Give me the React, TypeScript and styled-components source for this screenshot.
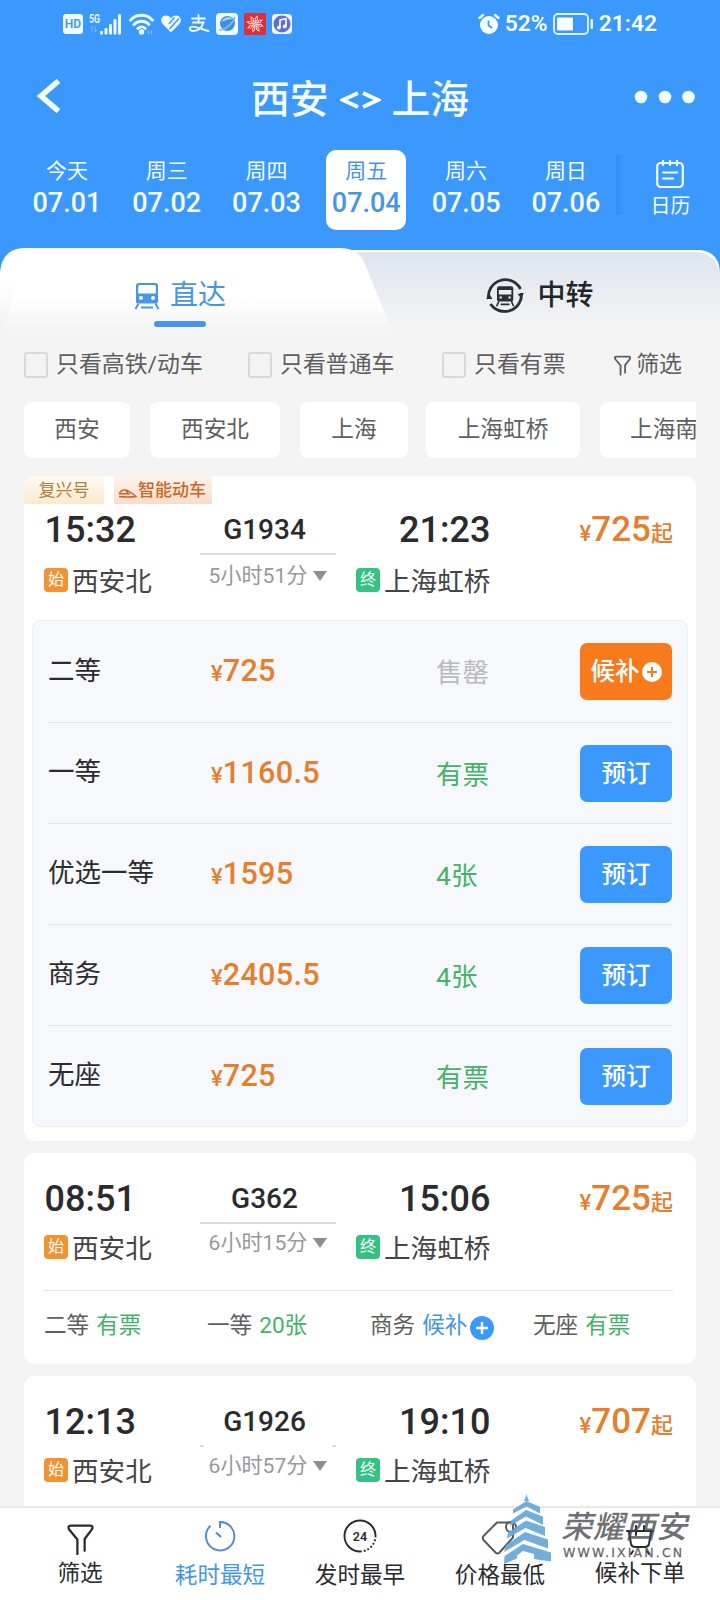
import React from 'react';
import styled, { createGlobalStyle, css } from 'styled-components';

const BLUE = '#3b98fc';
const LINK = '#4795e6';
const ORANGE = '#e57f2e';
const GREEN = '#45b26b';
const INK = '#2b2b2d';

const GlobalStyle = createGlobalStyle`
  *, *::before { box-sizing: border-box; }
  body {
    margin: 0;
    background: #f4f4f4;
    font-family: Roboto, "Noto Sans CJK SC", sans-serif;
    font-weight: 400;
    color: ${INK};
  }
  svg { display: block; flex: none; }
`;

const Screen = styled.div`
  position: relative;
  width: 720px;
  height: 1600px;
  overflow: hidden;
  display: flex;
  flex-direction: column;
  background: #f4f4f4;
`;

const Header = styled.header`
  height: 248px;
  flex: none;
  background: ${BLUE};
  color: #f6ffff;
`;

const StatusBar = styled.div`
  height: 50px;
  padding: 0 63px 2px 63px;
  display: flex;
  justify-content: space-between;
  align-items: center;
`;

const StatusGroup = styled.div<{ $gap: number }>`
  display: flex;
  align-items: center;
  gap: ${(p) => p.$gap}px;
  font-size: 22.8px;
  line-height: 26px;
  font-weight: 600;
`;

const TitleBar = styled.div`
  height: 98px;
  padding: 0 25px 2px 37px;
  display: grid;
  grid-template-columns: 60px 1fr 72px;
  align-items: center;
`;

const BackIcon = styled.svg`
  margin-top: -4px;
`;

const MoreIcon = styled.svg`
  justify-self: end;
  margin-top: -2px;
`;

const Title = styled.h1`
  margin: 4px 0 0;
  font-size: 38.8px;
  line-height: 50px;
  font-weight: 500;
  display: flex;
  justify-content: center;
  align-items: center;
  gap: 11px;
`;

const Swap = styled.svg`
  margin-top: -1px;
`;

const DateRow = styled.div`
  height: 84px;
  padding: 2px 0 0 17px;
  display: flex;
`;

const DateCell = styled.div<{ $active?: boolean }>`
  width: 99.8px;
  height: 80px;
  flex: none;
  display: flex;
  justify-content: center;
  & > div {
    width: 80px;
    height: 80px;
    padding-top: 7px;
    border-radius: 10px;
    display: flex;
    flex-direction: column;
    align-items: center;
    ${(p) => p.$active && css`background: #fff; color: ${LINK};`}
  }
`;

const DayName = styled.span`
  font-size: 21px;
  line-height: 28px;
`;

const DayDate = styled.span`
  margin-top: 1px;
  font-size: 27px;
  line-height: 34px;
  font-weight: 500;
`;

const Calendar = styled.div`
  flex: 1;
  height: 60px;
  margin-top: 5px;
  padding: 5px 0 0 5px;
  display: flex;
  flex-direction: column;
  align-items: center;
  gap: 5px;
  font-size: 20px;
  line-height: 26px;
  background: linear-gradient(90deg, rgba(30, 110, 210, 0.22), rgba(30, 110, 210, 0) 8px);
`;

const Tabs = styled.nav`
  position: relative;
  height: 84px;
  flex: none;
  display: flex;
  background: linear-gradient(${BLUE} 0 30px, #f4f4f4 30px);
`;

const TabBackdrop = styled.svg`
  position: absolute;
  inset: 0;
`;

const Tab = styled.div<{ $active?: boolean }>`
  position: relative;
  width: 360px;
  height: 84px;
  font-size: 28px;
  font-weight: ${(p) => (p.$active ? 400 : 500)};
  color: ${(p) => (p.$active ? LINK : '#222528')};
  display: flex;
  flex-direction: column;
  align-items: center;
`;

const TabLabel = styled.div<{ $gap: number }>`
  height: 73px;
  padding: 22px 0 0;
  display: flex;
  align-items: center;
  gap: ${(p) => p.$gap}px;
  line-height: 44px;
`;

const Underline = styled.div`
  width: 52px;
  height: 6px;
  border-radius: 3px;
  background: ${LINK};
`;

const FilterRow = styled.div`
  height: 70px;
  flex: none;
  padding: 0 38px 4px 24px;
  display: flex;
  align-items: center;
  color: #5e5e60;
  font-size: 22.9px;
  line-height: 28px;
`;

const Check = styled.label<{ $width: number }>`
  width: ${(p) => p.$width}px;
  display: flex;
  align-items: center;
  gap: 8px;
  white-space: nowrap;
  &::before {
    content: '';
    width: 24px;
    height: 26px;
    flex: none;
    border: 2px solid #d9d9d9;
    border-radius: 3px;
  }
`;

const FilterLink = styled.div`
  display: flex;
  align-items: center;
  gap: 5px;
  white-space: nowrap;
  margin-left: auto;
`;

const Chips = styled.div`
  height: 56px;
  flex: none;
  margin: 0 24px;
  overflow: hidden;
  display: flex;
  color: #5e5e60;
`;

const Chip = styled.div<{ $width: number; $gap: number }>`
  width: ${(p) => p.$width}px;
  margin-right: ${(p) => p.$gap}px;
  flex: none;
  height: 56px;
  border-radius: 8px;
  background: #fff;
  display: flex;
  align-items: center;
  justify-content: center;
  font-size: 22.7px;
  line-height: 30px;
`;

const List = styled.main`
  margin: 18px 24px 0;
  flex: 1;
  min-height: 0;
  overflow: hidden;
  display: flex;
  flex-direction: column;
  gap: 12px;
`;

const Card = styled.article<{ $height: number }>`
  height: ${(p) => p.$height}px;
  flex: none;
  border-radius: 10px;
  background: #fff;
  overflow: hidden;
`;

const Tags = styled.div`
  height: 28px;
  display: flex;
  align-items: flex-end;
  gap: 10px;
  font-size: 17px;
  line-height: 27px;
`;

const Tag = styled.span<{ $tone: 'gold' | 'copper' }>`
  height: 28px;
  display: flex;
  align-items: center;
  justify-content: center;
  gap: 1px;
  ${(p) =>
    p.$tone === 'gold'
      ? css`
          width: 80px;
          color: #a97f3d;
          background: linear-gradient(#fffaf3, #fde8cc);
        `
      : css`
          width: 98px;
          padding-right: 2px;
          color: #cc6528;
          background: linear-gradient(#fdf3ec, #fbdccb);
          font-weight: 500;
        `}
`;

const Trip = styled.div<{ $top: number; $height: number }>`
  height: ${(p) => p.$height}px;
  padding: ${(p) => p.$top}px 23px 0 20px;
  display: grid;
  grid-template-columns: 156px 136px 1fr auto;
`;

const Stop = styled.div<{ $arrive?: boolean }>`
  margin-left: ${(p) => (p.$arrive ? 20 : 0)}px;
`;

const Clock = styled.div<{ $indent: number }>`
  padding-left: ${(p) => p.$indent}px;
  height: 40px;
  font-size: 36px;
  line-height: 40px;
  font-weight: 500;
`;

const Station = styled.div<{ $gap: number }>`
  margin-top: ${(p) => p.$gap}px;
  height: 32px;
  display: flex;
  align-items: center;
  gap: 4px;
  font-size: 26.6px;
  line-height: 32px;
  color: #444446;
  white-space: nowrap;
`;

const Badge = styled.span<{ $color: string }>`
  width: 24px;
  height: 24px;
  border-radius: 4px;
  margin-top: -4px;
  background: ${(p) => p.$color};
  color: #fff;
  font-size: 16px;
  line-height: 24px;
  text-align: center;
`;

const Middle = styled.div`
  display: flex;
  flex-direction: column;
  align-items: center;
`;

const TrainNo = styled.div`
  height: 43px;
  padding-right: 7px;
  font-size: 28px;
  line-height: 39px;
  font-weight: 500;
`;

const Track = styled.div<{ $dots?: boolean }>`
  width: 136px;
  height: 2px;
  background: ${(p) =>
    p.$dots
      ? 'linear-gradient(90deg, #dcdcdc 0 4px, transparent 4px 132px, #dcdcdc 132px)'
      : '#dcdcdc'};
`;

const Duration = styled.div<{ $gap: number }>`
  margin-top: ${(p) => p.$gap}px;
  height: 26px;
  display: flex;
  align-items: center;
  gap: 6px;
  font-size: 21.1px;
  line-height: 26px;
  color: #98989a;
  white-space: nowrap;
`;

const FromPrice = styled.div`
  height: 40px;
  line-height: 40px;
  color: ${ORANGE};
  white-space: nowrap;
  font-size: 22px;
  font-weight: 500;
  b {
    font-size: 35px;
    font-weight: 500;
  }
`;

const FareBox = styled.div`
  margin: 0 8px;
  height: 507px;
  padding: 0 15px;
  border: 1px solid #eceff2;
  border-radius: 8px;
  background: #f6f8fc;
`;

const FareRow = styled.div`
  height: 101px;
  display: grid;
  grid-template-columns: 163px 225px 1fr 92px;
  align-items: center;
  font-size: 26.5px;
  line-height: 34px;
  & + & {
    border-top: 1px solid #e0e5ea;
  }
`;

const SeatName = styled.span`
  margin-top: -2px;
`;

const Fare = styled.span`
  padding-top: 2px;
  color: ${ORANGE};
  font-weight: 500;
  font-size: 22px;
  b {
    font-size: 30.6px;
    font-weight: 500;
    letter-spacing: 0.3px;
  }
`;

const Stock = styled.span<{ $soldOut?: boolean }>`
  padding-top: 3px;
  color: ${(p) => (p.$soldOut ? '#b9b9bd' : GREEN)};
`;

const Book = styled.button<{ $wait?: boolean }>`
  width: 92px;
  height: 57px;
  padding: 1px 0 0;
  border: 0;
  border-radius: 7px;
  background: ${(p) => (p.$wait ? '#f77b1d' : BLUE)};
  color: #fff;
  font: 500 24.5px/30px Roboto, 'Noto Sans CJK SC', sans-serif;
  display: flex;
  align-items: center;
  justify-content: center;
  gap: 2px;
`;

const SeatSummary = styled.div`
  margin: 0 23px 0 20px;
  padding-top: 20px;
  border-top: 1.5px solid #e2e2e2;
  display: grid;
  grid-template-columns: 163px 163px 163px auto;
  font-size: 22.6px;
  line-height: 30px;
  color: #5e5e60;
`;

const SeatItem = styled.span<{ $wait?: boolean }>`
  display: flex;
  align-items: center;
  gap: 7px;
  white-space: nowrap;
  em {
    font-style: normal;
    display: flex;
    align-items: center;
    gap: 3px;
    color: ${(p) => (p.$wait ? LINK : GREEN)};
  }
  svg {
    margin-top: 3px;
  }
`;

const BottomBar = styled.footer`
  height: 94px;
  flex: none;
  padding: 0 10px;
  border-top: 2px solid #e8e8e8;
  background: #fff;
  display: grid;
  grid-template-columns: repeat(5, 140px);
`;

const BottomItem = styled.div<{ $active?: boolean; $top: number; $drop: number }>`
  padding-top: ${(p) => p.$top}px;
  display: flex;
  flex-direction: column;
  align-items: center;
  font-size: 22.6px;
  line-height: 30px;
  color: ${(p) => (p.$active ? LINK : INK)};
  span {
    margin-top: ${(p) => p.$drop}px;
  }
`;

const Watermark = styled.div`
  position: absolute;
  left: 503px;
  top: 1494px;
  display: flex;
  gap: 8px;
  pointer-events: none;
`;

const WatermarkText = styled.div`
  padding-top: 15px;
  color: rgba(70, 72, 76, 0.8);
`;

const WatermarkName = styled.div`
  font-family: 'Liberation Serif', 'Noto Sans CJK SC', serif;
  font-size: 31px;
  line-height: 37px;
  font-style: italic;
  font-weight: 500;
  letter-spacing: 0.7px;
  white-space: nowrap;
`;

const WatermarkUrl = styled.div`
  padding-left: 2px;
  font-family: 'DejaVu Sans', sans-serif;
  font-size: 12.5px;
  line-height: 14px;
  letter-spacing: 2.15px;
  -webkit-text-stroke: 0.3px rgba(70, 72, 76, 0.8);
  white-space: nowrap;
`;

const HdIcon = () => (
  <svg width="20" height="20" viewBox="0 0 20 20">
    <rect width="20" height="20" rx="3" fill="#f0f9ff" />
    <text x="10" y="14.3" textAnchor="middle" fontSize="12" fontWeight="600" fill={BLUE}>HD</text>
  </svg>
);

const SignalIcon = () => (
  <svg width="34" height="24" viewBox="0 0 34 24" fill="#eef9ff">
    <text x="0" y="11" fontSize="13" fontWeight="600" textLength="11" lengthAdjust="spacingAndGlyphs">5G</text>
    <path d="M3 14v6M1.500 16l1.500-2M6 20v-6M7.500 18l-1.500 2" stroke="#80bdff" fill="none" />
    <rect x="11" y="19" width="3" height="3.500" rx="1" />
    <rect x="15.500" y="16" width="3" height="6.500" rx="1" />
    <rect x="20" y="12" width="3" height="10.500" rx="1" />
    <rect x="24.500" y="7" width="3" height="15.500" rx="1" />
    <rect x="29" y="2" width="3" height="20.500" rx="1" />
  </svg>
);

const WifiIcon = () => (
  <svg width="25" height="22" viewBox="0 0 25 22" fill="none" stroke="#eef9ff" strokeWidth="2.900" strokeLinecap="round">
    <path d="M1.500 7.200C7.500.6 17.500.6 23.500 7.200M5 11.500c4-4.400 11-4.400 15 0M8.800 15.500c2-2.200 5.400-2.200 7.400 0" />
    <circle cx="12.500" cy="19" r="1.300" fill="#eef9ff" />
    <path d="M19.500 17.500v3.500M22.500 17.500v3.500" stroke="#80bdff" strokeWidth="1.200" />
  </svg>
);

const HealthIcon = () => (
  <svg width="22" height="20" viewBox="0 0 22 20">
    <path
      d="M11 18.500L2.300 9.500C-.5 6 2 1.500 6 1.500c2.300 0 4 1.200 5 3 1-1.800 2.800-3 5-3 4 0 6.500 4.500 3.700 8z"
      fill="#eef9ff"
    />
    <path d="M14.500 3.500L9 10M19 4.500L9.500 15" stroke={BLUE} strokeWidth="1.400" />
  </svg>
);

const PayIcon = () => (
  <svg width="22" height="20" viewBox="0 0 22 20" fill="none" stroke="#eef9ff" strokeWidth="1.900" strokeLinecap="round">
    <path d="M4 4.500h13M10.500 1v7M5 8.500h10.500c-2 6-6 8.500-10 8.500-4.500 0-5-4-1-4.400C9 12.300 13 15.500 20.500 17" />
  </svg>
);

const BrowserIcon = () => (
  <svg width="22" height="22" viewBox="0 0 22 22">
    <rect width="22" height="22" rx="4" fill="#f1faff" />
    <circle cx="11.500" cy="10.500" r="7.500" fill="#3f8fe0" />
    <path d="M5 9c3-5 8-6 12-3-4 0-7 1-12 3z" fill="#a9d5fa" />
    <path d="M3 17C9 17 17 11 19 4" stroke="#7fb9ee" strokeWidth="1.600" fill="none" />
  </svg>
);

const HuaweiIcon = () => (
  <svg width="22" height="22" viewBox="0 0 22 22" fill="none" stroke="#ffd5d2" strokeWidth="1">
    <rect width="22" height="22" rx="1" fill="#dc2f37" stroke="none" />
    {[0, 45, 90, 135, 180, 225, 270, 315].map((a) => (
      <path key={a} d="M11 9.500L9.800 5.500 11 3l1.200 2.500z" transform={`rotate(${a + 15} 11 11)`} />
    ))}
  </svg>
);

const MusicIcon = () => (
  <svg width="20" height="20" viewBox="0 0 20 20">
    <rect width="20" height="20" rx="4" fill="#f4f6ff" />
    <circle cx="10" cy="10" r="8.500" fill="#5c6fd6" />
    <path d="M8 13.500V6l6-1.200v7.500" stroke="#fff" strokeWidth="1.600" fill="none" />
    <circle cx="6.800" cy="13.600" r="1.900" fill="#fff" />
    <circle cx="12.700" cy="12.400" r="1.900" fill="#fff" />
  </svg>
);

const AlarmIcon = () => (
  <svg width="22" height="22" viewBox="0 0 22 22">
    <circle cx="11" cy="12" r="9" fill="#f6ffff" />
    <path d="M1.500 5L5 2M20.500 5L17 2" stroke="#f6ffff" strokeWidth="2.400" strokeLinecap="round" />
    <path d="M10.500 7.500v5l3.500 2.500" stroke={BLUE} strokeWidth="1.800" fill="none" />
  </svg>
);

const BatteryIcon = () => (
  <svg width="41" height="22" viewBox="0 0 41 22">
    <rect x="1" y="1" width="34" height="20" rx="4" fill="none" stroke="#dff3ff" strokeWidth="1.900" />
    <rect x="4" y="4.500" width="16" height="13" rx="1" fill="#f6ffff" />
    <rect x="37.500" y="6" width="2.500" height="10" rx="1" fill="#dff3ff" />
  </svg>
);

const CalendarIcon = () => (
  <svg width="28" height="28" viewBox="0 0 28 28" fill="none" stroke="#f2fbff" strokeWidth="2.200" strokeLinecap="round">
    <rect x="1.200" y="3" width="25.600" height="24" rx="3.500" />
    <path d="M7 1v4M14 1v4M21 1v4M7 12.500h14M7 18.500h10" />
  </svg>
);

const TrainIcon = () => (
  <svg width="26" height="28" viewBox="0 0 26 28">
    <path
      fillRule="evenodd"
      fill="currentColor"
      d="M5 1h16q3 0 3 3v15q0 2.500-2.500 2.500h-17Q2 21.500 2 19V4q0-3 3-3zM4.200 4.500v7h17.600v-7Q21.800 3 20.300 3H5.700Q4.200 3 4.200 4.500zM7 14a2 2 0 100 4 2 2 0 000-4zM19 14a2 2 0 100 4 2 2 0 000-4z"
    />
    <path d="M4.500 21.500L1.500 27M21.500 21.500l3 5.500M7 25.500h12" stroke="currentColor" strokeWidth="2" />
  </svg>
);

const TransferIcon = () => (
  <svg width="38" height="38" viewBox="0 0 38 38" color="#2b2e33">
    <g fill="none" stroke="currentColor" strokeWidth="2.800">
      <path d="M2.500 22A17 17 0 0 1 34.500 12" />
      <path d="M35.500 16A17 17 0 0 1 4.500 27" />
    </g>
    <path d="M0 22l3.500-5 3 5zM38 16l-3 5-3.500-4z" fill="currentColor" />
    <g transform="translate(9.500 8.500) scale(.74)">
      <path
        fillRule="evenodd"
        fill="currentColor"
        d="M5 1h16q3 0 3 3v15q0 2.500-2.500 2.500h-17Q2 21.500 2 19V4q0-3 3-3zM4.500 6v6h17V6zM5.500 15v2.500h3V15zM17.500 15v2.500h3V15z"
      />
      <path d="M4.500 21.500L1.500 28M21.500 21.500l3 6.500M7 25.500h12" stroke="currentColor" strokeWidth="2.200" />
    </g>
  </svg>
);

const FunnelIcon = ({ width, height, stroke }: { width: number; height: number; stroke: number }) => (
  <svg width={width} height={height} viewBox="0 0 26 30" fill="none" stroke="currentColor" strokeWidth={stroke} strokeLinecap="round" strokeLinejoin="round">
    <path d="M10 29V15L1.800 5Q.5 1.500 3.500 1.500h19Q25.500 1.500 24.200 5L17 14.500V26" />
  </svg>
);

const BulletIcon = styled.svg`
  margin-top: 6px;
`;

const BulletTrainIcon = () => (
  <BulletIcon width="19" height="9" viewBox="0 0 19 9" fill="none" stroke="#cc6528" strokeWidth="1.400">
    <path d="M1 5Q3 .8 7 1q4 .5 11 6.500Q10 8.500 1 7.500M1 4.800h11M8 1.500l2 3" />
  </BulletIcon>
);

const PlusIcon = ({ size, fill, ink }: { size: number; fill: string; ink: string }) => (
  <svg width={size} height={size} viewBox="0 0 20 20">
    <circle cx="10" cy="10" r="10" fill={fill} />
    <path d="M10 5v10M5 10h10" stroke={ink} strokeWidth="2" />
  </svg>
);

const Triangle = () => (
  <svg width="14" height="10" viewBox="0 0 14 10">
    <path d="M0 0h14L7 10z" fill="#8e8e90" />
  </svg>
);

const TimerIcon = () => (
  <svg width="32" height="32" viewBox="0 0 32 32" fill="none" stroke="#5a87d8" strokeWidth="2">
    <path d="M16 8V2a14.200 14.200 0 1 1-9.500 3.800" />
    <path d="M12 12.500l5 4.500" strokeWidth="2.200" />
  </svg>
);

const Hours24Icon = () => (
  <svg width="34" height="34" viewBox="0 0 34 34" fill="none" stroke="#2b2b2d" strokeWidth="1.900">
    <path d="M32.500 17A15.500 15.500 0 1 0 17 32.500" />
    <path d="M17 32.500A15.500 15.500 0 0 0 32.500 17" strokeDasharray="1.800 2" />
    <text x="17" y="21.500" textAnchor="middle" fontSize="12.500" fontWeight="600" fill="#2b2b2d" stroke="none">24</text>
  </svg>
);

const PriceTagIcon = () => (
  <svg width="38" height="36" viewBox="0 0 38 36" fill="none" stroke="#555a60" strokeWidth="2" strokeLinejoin="round">
    <path d="M16 3.500h16v15L18.500 33.500q-2 2-4 0L2.500 21q-1.500-2 0-4z" />
    <circle cx="30" cy="8" r="5" />
  </svg>
);

const WaitlistIcon = () => (
  <svg width="30" height="36" viewBox="0 0 30 36" fill="none" stroke="#2b2b2d" strokeWidth="2" strokeLinecap="round">
    <path d="M2 11h26M4 12l2 12q.8 3 4 3h10q3.200 0 4-3l2-12M11 6v9M19 6v4M8 31l-2 3M22 31l2 3" />
  </svg>
);

const Pagoda = () => (
  <svg width="50" height="70" viewBox="0 0 50 70" fill="#68a8d8" fillOpacity="0.93">
    <path d="M23.500 0l1.500 5 1.500 2h-6l1.500-2z" />
    <path d="M10 15.500L23.500 7 37 13v6.500L23.500 12.500 10 19.500z" />
    <path d="M8 26.500L23 16l17 6.500v8.500L23 22.500 7 32z" />
    <path d="M5 38.500L23 26.500 42 33v9L22.500 34 4 44.500z" />
    <path d="M3 51L22 38l23 7.500v9L21.500 46 1 58z" />
    <path d="M1.500 62L20 50l28 8.500v9L31 65v-5l-11-3-6 4.500v3L1 70z" />
  </svg>
);

const dates = [
  ['今天', '07.01'],
  ['周三', '07.02'],
  ['周四', '07.03'],
  ['周五', '07.04'],
  ['周六', '07.05'],
  ['周日', '07.06'],
];

const chips: [string, number, number][] = [
  ['西安', 106, 20],
  ['西安北', 130, 20],
  ['上海', 108, 18],
  ['上海虹桥', 154, 20],
  ['上海南', 128, 0],
];

const fares: { seat: string; price: string; stock: string; wait?: boolean }[] = [
  { seat: '二等', price: '725', stock: '售罄', wait: true },
  { seat: '一等', price: '1160.5', stock: '有票' },
  { seat: '优选一等', price: '1595', stock: '4张' },
  { seat: '商务', price: '2405.5', stock: '4张' },
  { seat: '无座', price: '725', stock: '有票' },
];

const seats: { seat: string; stock: string; wait?: boolean }[] = [
  { seat: '二等', stock: '有票' },
  { seat: '一等', stock: '20张' },
  { seat: '商务', stock: '候补', wait: true },
  { seat: '无座', stock: '有票' },
];

interface TripProps {
  depart: string;
  arrive: string;
  train: string;
  duration: string;
  price: string;
  top: number;
  height: number;
  gap: number;
  dots?: boolean;
}

const TripInfo = ({ depart, arrive, train, duration, price, top, height, gap, dots }: TripProps) => (
  <Trip $top={top} $height={height}>
    <Stop>
      <Clock $indent={0.5}>{depart}</Clock>
      <Station $gap={gap}>
        <Badge $color="#f09331">始</Badge>西安北
      </Station>
    </Stop>
    <Middle>
      <TrainNo>{train}</TrainNo>
      <Track $dots={dots} />
      <Duration $gap={gap - 8}>
        {duration}
        <Triangle />
      </Duration>
    </Middle>
    <Stop $arrive>
      <Clock $indent={43}>{arrive}</Clock>
      <Station $gap={gap}>
        <Badge $color="#37c285">终</Badge>上海虹桥
      </Station>
    </Stop>
    <FromPrice>
      ¥<b>{price}</b>起
    </FromPrice>
  </Trip>
);

export default function App() {
  return (
    <>
      <GlobalStyle />
      <Screen>
        <Header>
          <StatusBar>
            <StatusGroup $gap={6}>
              <HdIcon />
              <SignalIcon />
              <WifiIcon />
              <HealthIcon />
              <PayIcon />
              <BrowserIcon />
              <HuaweiIcon />
              <MusicIcon />
            </StatusGroup>
            <StatusGroup $gap={5}>
              <AlarmIcon />
              52%
              <BatteryIcon />
              21:42
            </StatusGroup>
          </StatusBar>
          <TitleBar>
            <BackIcon width="24" height="34" viewBox="0 0 24 34" fill="none" stroke="#f6ffff" strokeWidth="5.500">
              <path d="M21.500 2L4 17l17.500 15" />
            </BackIcon>
            <Title>
              西安
              <Swap width="41" height="20" viewBox="0 0 41 20" fill="none" stroke="#f6ffff" strokeWidth="3.800">
                <path d="M18 3L3 10l15 7M23 3l15 7-15 7" />
              </Swap>
              上海
            </Title>
            <MoreIcon width="62" height="14" viewBox="0 0 62 14" fill="#f6ffff">
              <circle cx="8" cy="7" r="6.300" />
              <circle cx="32" cy="7" r="6.300" />
              <circle cx="55.500" cy="7" r="6.300" />
            </MoreIcon>
          </TitleBar>
          <DateRow>
            {dates.map(([day, date]) => (
              <DateCell key={date} $active={date === '07.04'}>
                <div>
                  <DayName>{day}</DayName>
                  <DayDate>{date}</DayDate>
                </div>
              </DateCell>
            ))}
            <Calendar>
              <CalendarIcon />
              日历
            </Calendar>
          </DateRow>
        </Header>

        <Tabs>
          <TabBackdrop width="720" height="84" viewBox="0 0 720 84">
            <defs>
              <linearGradient id="idle" x1="0" y1="0" x2="0" y2="1">
                <stop offset="0" stopColor="#dfe5ef" />
                <stop offset="1" stopColor="#f4f4f4" />
              </linearGradient>
              <linearGradient id="current" x1="0" y1="0" x2="0" y2="1">
                <stop offset="0.6" stopColor="#fff" />
                <stop offset="1" stopColor="#f4f4f4" />
              </linearGradient>
              <linearGradient id="edge" x1="0" y1="0" x2="0" y2="1">
                <stop offset="0" stopColor="#f4f4f4" stopOpacity="0" />
                <stop offset="1" stopColor="#f4f4f4" />
              </linearGradient>
            </defs>
            <path d="M300 2h400q20 2 20 24v58H300z" fill="#fff" />
            <path d="M300 4h396q22 2 24 24v56H300z" fill="url(#idle)" />
            <path d="M0 24Q2 2 22 0H340q18 0 24 14l27 66v4H0z" fill="url(#current)" />
            <path d="M0 30h19L6 72v12H0z" fill="url(#edge)" />
          </TabBackdrop>
          <Tab $active>
            <TabLabel $gap={10}>
              <TrainIcon />
              直达
            </TabLabel>
            <Underline />
          </Tab>
          <Tab>
            <TabLabel $gap={13}>
              <TransferIcon />
              中转
            </TabLabel>
          </Tab>
        </Tabs>

        <FilterRow>
          <Check $width={224}>只看高铁/动车</Check>
          <Check $width={194}>只看普通车</Check>
          <Check $width={150}>只看有票</Check>
          <FilterLink>
            <FunnelIcon width={17} height={21} stroke={2.8} />
            筛选
          </FilterLink>
        </FilterRow>

        <Chips>
          {chips.map(([name, width, gap]) => (
            <Chip key={name} $width={width} $gap={gap}>
              {name}
            </Chip>
          ))}
        </Chips>

        <List>
          <Card $height={665}>
            <Tags>
              <Tag $tone="gold">复兴号</Tag>
              <Tag $tone="copper">
                <BulletTrainIcon />
                智能动车
              </Tag>
            </Tags>
            <TripInfo depart="15:32" arrive="21:23" train="G1934" duration="5小时51分" price="725" top={6} height={116} gap={16} />
            <FareBox>
              {fares.map((f) => (
                <FareRow key={f.seat}>
                  <SeatName>{f.seat}</SeatName>
                  <Fare>
                    ¥<b>{f.price}</b>
                  </Fare>
                  <Stock $soldOut={f.wait}>{f.stock}</Stock>
                  <Book $wait={f.wait}>
                    {f.wait ? '候补' : '预订'}
                    {f.wait && <PlusIcon size={20} fill="#fff" ink="#f77b1d" />}
                  </Book>
                </FareRow>
              ))}
            </FareBox>
          </Card>

          <Card $height={211}>
            <TripInfo depart="08:51" arrive="15:06" train="G362" duration="6小时15分" price="725" top={26} height={137} gap={14} />
            <SeatSummary>
              {seats.map((s) => (
                <SeatItem key={s.seat} $wait={s.wait}>
                  {s.seat}
                  <em>
                    {s.stock}
                    {s.wait && <PlusIcon size={24} fill={BLUE} ink="#fff" />}
                  </em>
                </SeatItem>
              ))}
            </SeatSummary>
          </Card>

          <Card $height={211}>
            <TripInfo depart="12:13" arrive="19:10" train="G1926" duration="6小时57分" price="707" top={26} height={137} gap={14} dots />
          </Card>
        </List>

        <BottomBar>
          <BottomItem $top={16} $drop={4}>
            <FunnelIcon width={27} height={31} stroke={2.2} />
            <span>筛选</span>
          </BottomItem>
          <BottomItem $active $top={12} $drop={9}>
            <TimerIcon />
            <span>耗时最短</span>
          </BottomItem>
          <BottomItem $top={11} $drop={8}>
            <Hours24Icon />
            <span>发时最早</span>
          </BottomItem>
          <BottomItem $top={11} $drop={6}>
            <PriceTagIcon />
            <span>价格最低</span>
          </BottomItem>
          <BottomItem $top={12} $drop={3}>
            <WaitlistIcon />
            <span>候补下单</span>
          </BottomItem>
        </BottomBar>

        <Watermark>
          <Pagoda />
          <WatermarkText>
            <WatermarkName>荣耀西安</WatermarkName>
            <WatermarkUrl>WWW.IXIAN.CN</WatermarkUrl>
          </WatermarkText>
        </Watermark>
      </Screen>
    </>
  );
}
